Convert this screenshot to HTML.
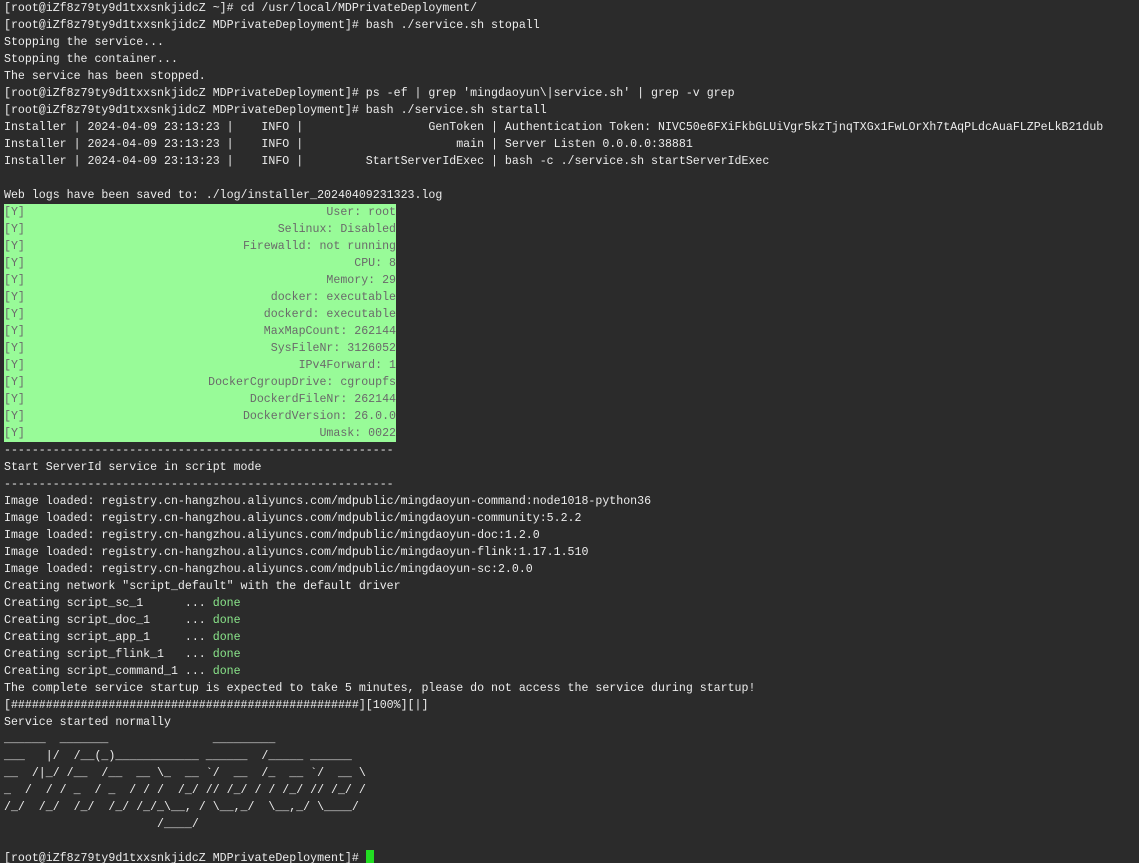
<!DOCTYPE html>
<html><head><meta charset="utf-8"><style>
html,body{margin:0;padding:0;background:#2b2b2b;width:1139px;height:863px;overflow:hidden}
pre{margin:0;padding:0 0 0 4px;font-family:"Liberation Mono",monospace;font-size:11.6px;line-height:17px;color:#ececec;white-space:pre}
.g{display:inline-block;width:392px;background:#98fb98;color:#6a6a6a;vertical-align:top}
.g b{font-weight:normal;float:right}
.d{color:#8ae68a}
.c{display:inline-block;width:8px;height:14px;background:#22dd22;vertical-align:-3px}
</style></head><body><pre>[root@iZf8z79ty9d1txxsnkjidcZ ~]# cd /usr/local/MDPrivateDeployment/
[root@iZf8z79ty9d1txxsnkjidcZ MDPrivateDeployment]# bash ./service.sh stopall
Stopping the service...
Stopping the container...
The service has been stopped.
[root@iZf8z79ty9d1txxsnkjidcZ MDPrivateDeployment]# ps -ef | grep 'mingdaoyun\|service.sh' | grep -v grep
[root@iZf8z79ty9d1txxsnkjidcZ MDPrivateDeployment]# bash ./service.sh startall
Installer | 2024-04-09 23:13:23 |    INFO |                  GenToken | Authentication Token: NIVC50e6FXiFkbGLUiVgr5kzTjnqTXGx1FwLOrXh7tAqPLdcAuaFLZPeLkB21dub
Installer | 2024-04-09 23:13:23 |    INFO |                      main | Server Listen 0.0.0.0:38881
Installer | 2024-04-09 23:13:23 |    INFO |         StartServerIdExec | bash -c ./service.sh startServerIdExec

Web logs have been saved to: ./log/installer_20240409231323.log
<span class="g">[Y]<b>User: root</b></span>
<span class="g">[Y]<b>Selinux: Disabled</b></span>
<span class="g">[Y]<b>Firewalld: not running</b></span>
<span class="g">[Y]<b>CPU: 8</b></span>
<span class="g">[Y]<b>Memory: 29</b></span>
<span class="g">[Y]<b>docker: executable</b></span>
<span class="g">[Y]<b>dockerd: executable</b></span>
<span class="g">[Y]<b>MaxMapCount: 262144</b></span>
<span class="g">[Y]<b>SysFileNr: 3126052</b></span>
<span class="g">[Y]<b>IPv4Forward: 1</b></span>
<span class="g">[Y]<b>DockerCgroupDrive: cgroupfs</b></span>
<span class="g">[Y]<b>DockerdFileNr: 262144</b></span>
<span class="g">[Y]<b>DockerdVersion: 26.0.0</b></span>
<span class="g">[Y]<b>Umask: 0022</b></span>
--------------------------------------------------------
Start ServerId service in script mode
--------------------------------------------------------
Image loaded: registry.cn-hangzhou.aliyuncs.com/mdpublic/mingdaoyun-command:node1018-python36
Image loaded: registry.cn-hangzhou.aliyuncs.com/mdpublic/mingdaoyun-community:5.2.2
Image loaded: registry.cn-hangzhou.aliyuncs.com/mdpublic/mingdaoyun-doc:1.2.0
Image loaded: registry.cn-hangzhou.aliyuncs.com/mdpublic/mingdaoyun-flink:1.17.1.510
Image loaded: registry.cn-hangzhou.aliyuncs.com/mdpublic/mingdaoyun-sc:2.0.0
Creating network "script_default" with the default driver
Creating script_sc_1      ... <span class="d">done</span>
Creating script_doc_1     ... <span class="d">done</span>
Creating script_app_1     ... <span class="d">done</span>
Creating script_flink_1   ... <span class="d">done</span>
Creating script_command_1 ... <span class="d">done</span>
The complete service startup is expected to take 5 minutes, please do not access the service during startup!
[##################################################][100%][|]
Service started normally
______  _______               _________
___   |/  /__(_)____________ ______  /_____ ______
__  /|_/ /__  /__  __ \_  __ `/  __  /_  __ `/  __ \
_  /  / / _  / _  / / /  /_/ // /_/ / / /_/ // /_/ /
/_/  /_/  /_/  /_/ /_/_\__, / \__,_/  \__,_/ \____/
                      /____/

[root@iZf8z79ty9d1txxsnkjidcZ MDPrivateDeployment]# <span class="c"></span></pre></body></html>
